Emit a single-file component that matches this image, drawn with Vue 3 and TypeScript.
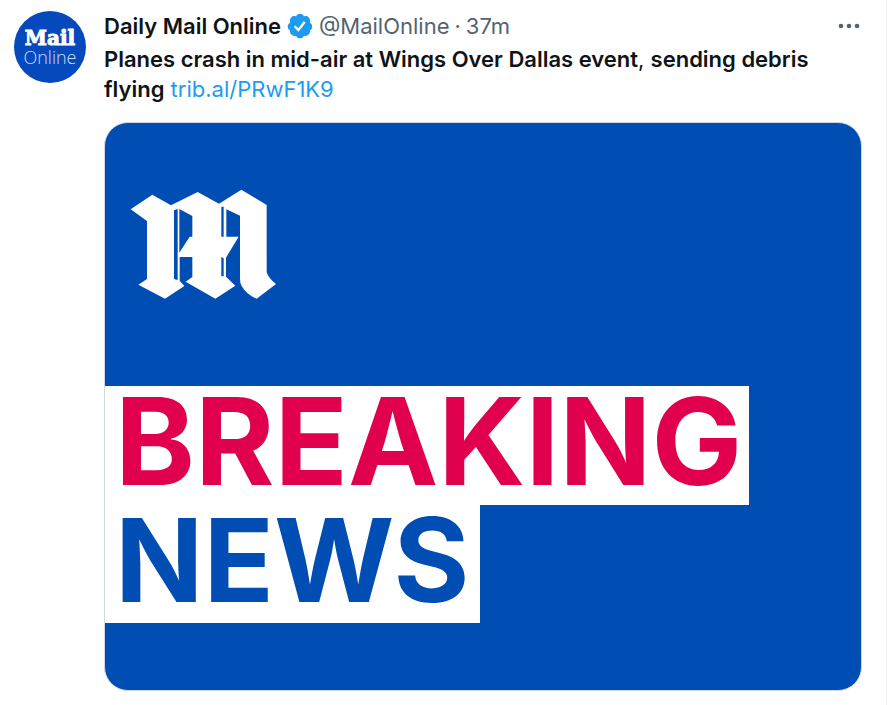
<script setup lang="ts">
interface Post {
  name: string
  handle: string
  age: string
  lead: string
  rest: string
  link: string
}

const post: Post = {
  name: 'Daily Mail Online',
  handle: '@MailOnline',
  age: '37m',
  lead: 'Planes crash in mid-air at Wings Over Dallas event',
  rest: 'sending debris flying',
  link: 'trib.al/PRwF1K9',
}
</script>

<template>
  <main class="timeline">
    <article class="post">
      <a class="avatar" href="#profile" aria-label="Daily Mail Online profile">
        <span class="avatar-mail">Mail</span>
        <span class="avatar-online">Online</span>
      </a>
      <div class="body">
        <header class="head">
          <a class="name" href="#profile">{{ post.name }}</a>
          <svg class="badge" viewBox="0 0 24 24" role="img" aria-label="Verified account">
            <path
              fill="#1d9bf0"
              d="M22.5 12.5c0-1.58-.875-2.95-2.148-3.6.154-.435.238-.905.238-1.4 0-2.21-1.71-3.998-3.818-3.998-.47 0-.92.084-1.336.25C14.818 2.415 13.51 1.5 12 1.5s-2.816.917-3.437 2.25c-.415-.165-.866-.25-1.336-.25-2.11 0-3.818 1.79-3.818 4 0 .494.083.964.237 1.4-1.272.65-2.147 2.018-2.147 3.6 0 1.495.782 2.798 1.942 3.486-.02.17-.032.34-.032.514 0 2.21 1.708 4 3.818 4 .47 0 .92-.086 1.335-.25.62 1.334 1.926 2.25 3.437 2.25 1.512 0 2.818-.916 3.437-2.25.415.163.865.248 1.336.248 2.11 0 3.818-1.79 3.818-4 0-.174-.012-.344-.033-.513 1.158-.687 1.943-1.99 1.943-3.484z"
            />
            <path fill="none" stroke="#fff" stroke-width="2" d="M7.4 12.2l3.2 3.2 5.4-6.8" />
          </svg>
          <a class="meta" href="#profile">{{ post.handle }}</a>
          <span class="meta dot">·</span>
          <a class="meta" href="#post"><time>{{ post.age }}</time></a>
          <button class="more" type="button" aria-label="More">
            <svg viewBox="0 0 22 6" aria-hidden="true">
              <circle cx="3" cy="3" r="2.3" />
              <circle cx="11" cy="3" r="2.3" />
              <circle cx="19" cy="3" r="2.3" />
            </svg>
          </button>
        </header>
        <p class="text">
          <b>{{ post.lead }}</b>, <b>{{ post.rest }}</b> <a class="link" href="#story">{{ post.link }}</a>
        </p>
        <section class="card">
          <svg class="crest" viewBox="0 0 510 390" role="img" aria-label="Mail crest">
            <path
              fill="#fff"
              d="M32 88L97 44L153 76L233 36L297 71L364 29L440 75V277Q446 296 468 312L410 356Q380 345 365 318Q360 310 360 298V107L319 88V170H356L318 233V290L346 317L286 356L197 305L217 291V231H179V302L193 318L135 356L55 314L81 297V123Z"
            />
            <path
              fill="#004db3"
              d="M162 91L173 87V300L162 297ZM178 87L217 108V170H209L178 218ZM304 80H311V170H304ZM304 231L311 235V289H304Z"
            />
          </svg>
          <h1 class="banner">
            <span class="line breaking">BREAKING</span>
            <span class="line news">NEWS</span>
          </h1>
        </section>
      </div>
    </article>
  </main>
</template>

<style>
body {
  background: #fff;
}
</style>

<style scoped>
.timeline {
  box-sizing: border-box;
  min-height: 100vh;
  margin-right: 2px;
  border-right: 1px solid #eff3f4;
  font-family: Inter, "Liberation Sans", sans-serif;
  color: #0f1419;
}
.post {
  display: flex;
  gap: 18px;
  padding: 11px 24px 14px 14px;
}
a {
  color: inherit;
  text-decoration: none;
}
.avatar {
  display: flex;
  flex: none;
  flex-direction: column;
  align-items: center;
  box-sizing: border-box;
  width: 72px;
  height: 72px;
  padding-top: 17px;
  border-radius: 50%;
  background: #0549bd;
  color: #fff;
}
.avatar-mail {
  font: 900 20px/20px "DejaVu Serif", serif;
  -webkit-text-stroke: 1px #fff;
}
.avatar-online {
  color: #c9dcff;
  font: 300 18px/18px "Open Sans", sans-serif;
}
.body {
  flex: 1;
  min-width: 0;
}
.head {
  display: flex;
  align-items: center;
  height: 30px;
  font-size: 22px;
  line-height: 30px;
  white-space: nowrap;
}
.name {
  font-weight: 600;
}
.badge {
  flex: none;
  width: 28px;
  height: 28px;
  margin: 0 5px;
}
.meta {
  color: #536471;
}
.dot {
  margin: 0 5px;
}
.more {
  display: flex;
  margin: 0 0 0 auto;
  padding: 0 2px;
  border: 0;
  background: none;
}
.more svg {
  width: 22px;
  height: 6px;
  fill: #536471;
}
.text {
  margin: 3px 0 18px;
  font-size: 22px;
  line-height: 30px;
}
.text b {
  font-weight: 600;
}
.link {
  color: #1d9bf0;
}
.card {
  box-sizing: border-box;
  overflow: hidden;
  padding: 57px 0 67px;
  border: 1px solid #cfd9de;
  border-radius: 24px;
  background: #004db3;
}
.crest {
  display: block;
  width: 170px;
  height: 130px;
  margin: 0 0 76px 15px;
}
.banner {
  display: flex;
  flex-direction: column;
  align-items: flex-start;
  margin: 0;
  font-weight: 700;
  line-height: 111px;
}
.line {
  padding: 0 10px 7px;
  background: #fff;
}
.breaking {
  padding: 0 7px 8px 10px;
  color: #e0004d;
  font-size: 121px;
}
.news {
  color: #004db3;
  font-size: 116px;
}
</style>
